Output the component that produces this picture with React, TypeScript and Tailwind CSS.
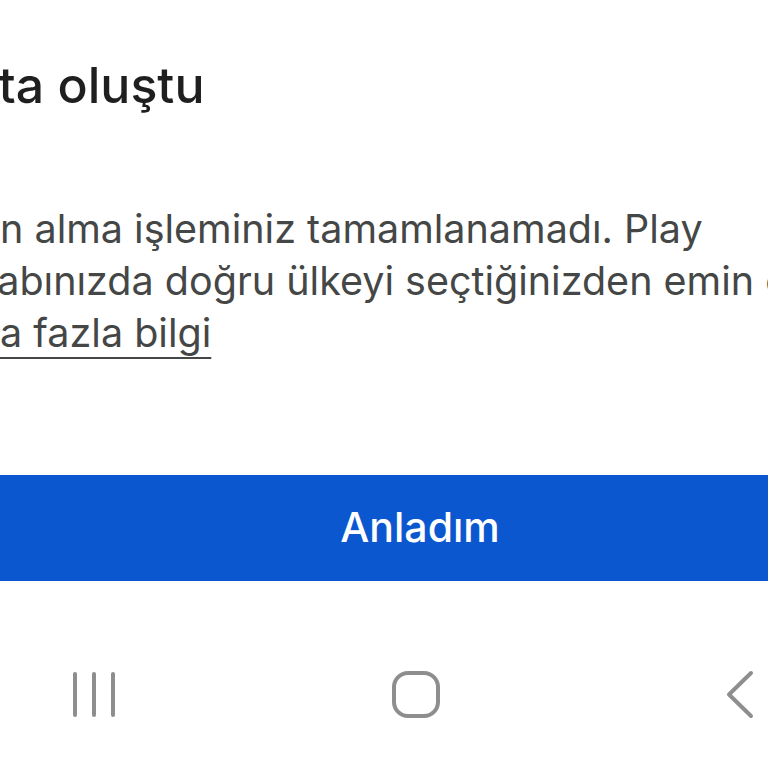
import React from 'react';

const NavBar = () => (
  <div className="mt-[90px] flex h-[47px] items-center text-[#8e8e8e]">
    <svg className="ml-[72px]" width="44" height="47" viewBox="0 0 44 47" fill="none" stroke="currentColor" strokeWidth="4" strokeLinecap="round">
      <line x1="3" y1="3" x2="3" y2="44" />
      <line x1="22" y1="3" x2="22" y2="44" />
      <line x1="41" y1="3" x2="41" y2="44" />
    </svg>
    <svg className="ml-[276px]" width="48" height="47" viewBox="0 0 48 47" fill="none" stroke="currentColor" strokeWidth="4">
      <rect x="2" y="2" width="44" height="43" rx="14" />
    </svg>
    <svg className="ml-[285px]" width="30" height="49" viewBox="0 0 30 49" fill="none" stroke="currentColor" strokeWidth="4" strokeLinecap="round" strokeLinejoin="round">
      <polyline points="26,3 4,24.5 26,46" />
    </svg>
  </div>
);

export default function App() {
  return (
    <div className="relative h-[768px] w-[768px] overflow-hidden bg-white font-['Inter',sans-serif]">
      <div className="-ml-[70px] w-[980px]">
        <h1 className="-ml-[68px] mt-[53px] whitespace-nowrap text-[50px] leading-[64px] font-medium text-[#1f1f1f]">
          Bir hata oluştu
        </h1>
        <div className="mt-[86px] whitespace-nowrap text-[39.5px] leading-[52px] text-[#444746]">
          <p>Satın alma işleminiz tamamlanamadı. Play</p>
          <p>hesabınızda doğru ülkeyi seçtiğinizden emin olun.</p>
          <p className="-ml-[4px]">
            <a className="underline decoration-2 underline-offset-[10px]">Daha fazla bilgi</a>
          </p>
        </div>
        <button className="mt-[116px] flex h-[106px] w-full items-center justify-center bg-[#0b57d0] text-[41px] font-medium text-white">
          Anladım
        </button>
      </div>
      <NavBar />
    </div>
  );
}
